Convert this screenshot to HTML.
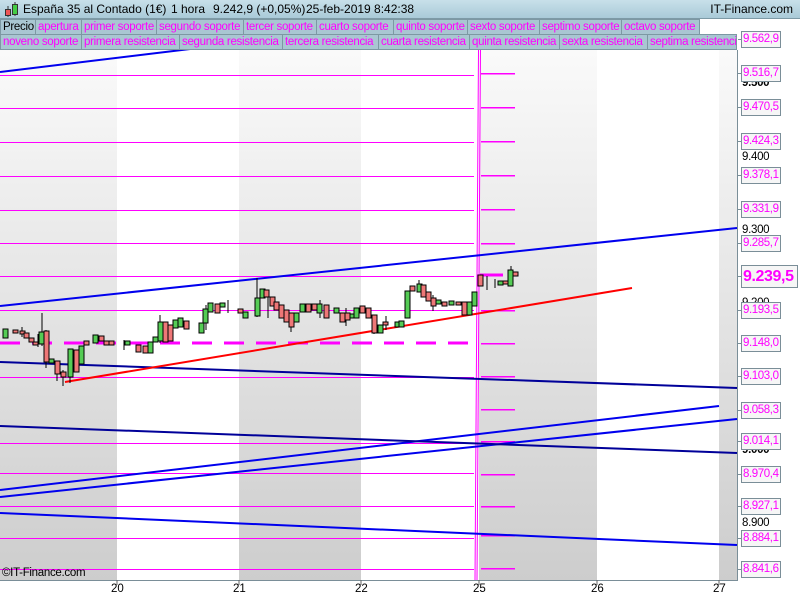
<!DOCTYPE html>
<html><head><meta charset="utf-8"><style>
*{margin:0;padding:0;box-sizing:border-box}
body{width:800px;height:600px;overflow:hidden;background:#fff;font-family:"Liberation Sans",sans-serif;position:relative}
.title{position:absolute;left:0;top:0;width:800px;height:19px;background:linear-gradient(#c8e0ea,#a9cad8);border-bottom:1px solid #7d9aa6;font-size:12px;line-height:19px;color:#000}
.title span{position:absolute}
.row{position:absolute;left:0;height:16px;font-size:11.5px;line-height:14px}
.tab{position:absolute;top:0;height:16px;background:#a9c6d2;border:1px solid #7d98a3;color:#ff00ff;padding-left:2px;white-space:nowrap;overflow:hidden;letter-spacing:-0.3px}
.lbl{position:absolute;left:741px;width:40px;height:17px;border:1px solid #7a8e98;background:#f6f6f6;color:#ff00ff;font-size:11.5px;line-height:15px;padding-left:1px;letter-spacing:-0.4px}
.ax{position:absolute;left:742px;font-size:11.5px;color:#000;letter-spacing:-0.3px}
.xl{position:absolute;top:583px;font-size:11.5px;color:#000}
</style></head><body>
<svg width="800" height="600" style="position:absolute;left:0;top:0">
<defs><linearGradient id="g" x1="0" y1="0" x2="0" y2="1"><stop offset="0" stop-color="#fafafa"/><stop offset="1" stop-color="#cdcdcd"/></linearGradient></defs>
<rect x="0" y="50" width="117" height="530" fill="url(#g)"/>
<rect x="239" y="50" width="122" height="530" fill="url(#g)"/>
<rect x="479" y="50" width="118" height="530" fill="url(#g)"/>
<rect x="719" y="50" width="18" height="530" fill="url(#g)"/>
<line x1="737.5" y1="50" x2="737.5" y2="580" stroke="#7a8e98"/>
<line x1="0" y1="580.5" x2="738" y2="580.5" stroke="#7a8e98"/>
<g stroke="#666"><line x1="117" y1="580" x2="117" y2="585"/><line x1="239" y1="580" x2="239" y2="585"/><line x1="361" y1="580" x2="361" y2="585"/><line x1="479" y1="580" x2="479" y2="585"/><line x1="597" y1="580" x2="597" y2="585"/><line x1="719" y1="580" x2="719" y2="585"/></g>
<path fill="none" stroke="#ff00ff" stroke-width="1" d="M0 75.5H474M0 108.5H474M0 142.5H474M0 176.5H474M0 210.5H474M0 243.5H474M0 276.5H474M0 310.5H474M0 377.5H474M0 443.5H474M0 473.5H474M0 506.5H474M0 538.5H474M0 569.5H474"/>
<g fill="#ff00ff">
<rect x="481" y="73" width="34" height="1.5"/><rect x="481" y="107" width="34" height="1.5"/><rect x="481" y="141" width="34" height="1.5"/><rect x="481" y="175" width="34" height="1.5"/><rect x="481" y="209" width="34" height="1.5"/><rect x="481" y="243" width="34" height="1.5"/><rect x="481" y="310" width="34" height="1.5"/><rect x="481" y="343" width="34" height="1.5"/><rect x="481" y="376" width="34" height="1.5"/><rect x="481" y="409" width="34" height="1.5"/><rect x="481" y="441" width="34" height="1.5"/><rect x="481" y="474" width="34" height="1.5"/><rect x="481" y="506" width="34" height="1.5"/><rect x="481" y="535" width="34" height="1.5"/><rect x="481" y="568" width="34" height="1.5"/>
</g>
<path fill="none" stroke="#ff00ff" stroke-width="1" d="M478.5 50L475 580M480.5 50L477 580"/>
<line x1="0" y1="343" x2="470" y2="343" stroke="#ff00ff" stroke-width="3" stroke-dasharray="20,12"/>
<line x1="480" y1="275" x2="503" y2="275" stroke="#ff00ff" stroke-width="3"/>
<g stroke-width="2" fill="none">
<line x1="0" y1="306" x2="737" y2="228" stroke="#0000ee"/>
<line x1="0" y1="72" x2="215" y2="46" stroke="#0000ee"/>
<line x1="0" y1="362" x2="737" y2="388" stroke="#000099"/>
<line x1="0" y1="490" x2="719" y2="406" stroke="#0000ee"/>
<line x1="0" y1="497" x2="737" y2="419" stroke="#0000ee"/>
<line x1="0" y1="426" x2="737" y2="453" stroke="#000099"/>
<line x1="0" y1="513" x2="737" y2="545" stroke="#0000ee"/>
<line x1="65" y1="382" x2="632" y2="288" stroke="#ff0000"/>
</g>
<g stroke="#000" stroke-width="1">
<path d="M42 313V346M46 330V368M57 361V381M63 370V386M70 349V383M160 315V343M257 278V317M291 313V332M374 315V334M419 280V292M511 266V286M22 327V337M38 334V347M124 340V350M206 305V330M228 300V313M268 292V318M320 300V318M346 308V326M386 316V330M433 295V311M487 276V290M495 279V288"/>
</g>
<g stroke="#000" stroke-width="1">
<rect x="3" y="329" width="5" height="9" fill="#5c5"/><rect x="13" y="330" width="5" height="3" fill="#e77"/><rect x="20" y="331" width="5" height="3" fill="#e77"/><rect x="24" y="333" width="5" height="5" fill="#e77"/><rect x="29" y="338" width="5" height="4" fill="#e77"/><rect x="33" y="342" width="5" height="3" fill="#e77"/><rect x="39" y="332" width="5" height="12" fill="#5c5"/><rect x="44" y="331" width="5" height="31" fill="#e77"/><rect x="49" y="359" width="5" height="4" fill="#5c5"/><rect x="55" y="361" width="5" height="13" fill="#e77"/><rect x="61" y="372" width="5" height="5" fill="#e77"/><rect x="68" y="349" width="5" height="28" fill="#5c5"/><rect x="74" y="350" width="5" height="22" fill="#e77"/><rect x="79" y="346" width="5" height="18" fill="#5c5"/><rect x="84" y="341" width="5" height="4" fill="#e77"/><rect x="93" y="335" width="5" height="8" fill="#5c5"/><rect x="99" y="336" width="5" height="5" fill="#e77"/><rect x="104" y="341" width="5" height="4" fill="#e77"/><rect x="109" y="341" width="5" height="4" fill="#e77"/><rect x="125" y="341" width="5" height="4" fill="#5c5"/><rect x="136" y="345" width="5" height="7" fill="#e77"/><rect x="143" y="346" width="5" height="7" fill="#e77"/><rect x="148" y="342" width="5" height="11" fill="#5c5"/><rect x="153" y="337" width="5" height="5" fill="#5c5"/><rect x="158" y="322" width="5" height="19" fill="#5c5"/><rect x="163" y="322" width="5" height="20" fill="#e77"/><rect x="168" y="325" width="5" height="16" fill="#e77"/><rect x="173" y="320" width="5" height="8" fill="#5c5"/><rect x="178" y="318" width="5" height="9" fill="#5c5"/><rect x="184" y="321" width="5" height="8" fill="#e77"/>
<rect x="199" y="323" width="5" height="10" fill="#5c5"/><rect x="203" y="309" width="5" height="14" fill="#5c5"/><rect x="208" y="303" width="5" height="9" fill="#5c5"/><rect x="215" y="304" width="5" height="9" fill="#e77"/><rect x="220" y="303" width="5" height="4" fill="#5c5"/><rect x="238" y="309" width="5" height="4" fill="#e77"/><rect x="243" y="312" width="5" height="6" fill="#5c5"/><rect x="255" y="298" width="5" height="18" fill="#5c5"/><rect x="260" y="289" width="5" height="9" fill="#5c5"/><rect x="264" y="290" width="5" height="7" fill="#e77"/><rect x="270" y="297" width="5" height="9" fill="#e77"/><rect x="274" y="302" width="5" height="8" fill="#e77"/><rect x="279" y="305" width="5" height="13" fill="#e77"/><rect x="284" y="310" width="5" height="12" fill="#e77"/><rect x="289" y="313" width="5" height="14" fill="#e77"/><rect x="294" y="313" width="5" height="9" fill="#5c5"/><rect x="300" y="304" width="5" height="8" fill="#5c5"/><rect x="306" y="304" width="5" height="8" fill="#e77"/><rect x="312" y="304" width="5" height="6" fill="#e77"/><rect x="317" y="304" width="5" height="9" fill="#5c5"/><rect x="324" y="305" width="5" height="13" fill="#e77"/><rect x="334" y="308" width="5" height="5" fill="#5c5"/><rect x="340" y="313" width="5" height="9" fill="#e77"/><rect x="345" y="313" width="5" height="7" fill="#e77"/><rect x="350" y="314" width="5" height="4" fill="#5c5"/><rect x="354" y="308" width="5" height="10" fill="#5c5"/><rect x="360" y="306" width="5" height="7" fill="#e77"/><rect x="366" y="308" width="5" height="10" fill="#e77"/><rect x="372" y="315" width="5" height="18" fill="#e77"/><rect x="378" y="325" width="5" height="8" fill="#5c5"/><rect x="383" y="322" width="5" height="3" fill="#e77"/><rect x="395" y="322" width="5" height="5" fill="#5c5"/><rect x="399" y="321" width="5" height="6" fill="#5c5"/><rect x="405" y="291" width="5" height="27" fill="#5c5"/><rect x="410" y="286" width="5" height="5" fill="#e77"/><rect x="417" y="284" width="5" height="8" fill="#5c5"/><rect x="421" y="285" width="5" height="12" fill="#e77"/><rect x="426" y="292" width="5" height="9" fill="#e77"/><rect x="431" y="298" width="5" height="8" fill="#e77"/><rect x="436" y="300" width="5" height="4" fill="#5c5"/><rect x="442" y="302" width="5" height="4" fill="#e77"/><rect x="449" y="301" width="5" height="4" fill="#5c5"/><rect x="456" y="302" width="5" height="3" fill="#e77"/><rect x="462" y="302" width="5" height="13" fill="#e77"/><rect x="467" y="302" width="5" height="13" fill="#5c5"/><rect x="472" y="292" width="5" height="14" fill="#5c5"/><rect x="478" y="275" width="5" height="11" fill="#e77"/><rect x="498" y="281" width="5" height="4" fill="#5c5"/><rect x="503" y="281" width="5" height="3" fill="#e77"/><rect x="508" y="270" width="5" height="16" fill="#5c5"/><rect x="513" y="272" width="5" height="4" fill="#e77"/>
</g>
<path stroke="#7a8e98" d="M738 39.5H741M738 73.5H741M738 107.5H741M738 141.5H741M738 175.5H741M738 209.5H741M738 243.5H741M738 276.5H741M738 310.5H741M738 343.5H741M738 376.5H741M738 410.5H741M738 441.5H741M738 474.5H741M738 506.5H741M738 538.5H741M738 569.5H741"/>
</svg>
<div class="title">
<svg width="22" height="19" style="position:absolute;left:2px;top:0"><line x1="6" y1="6" x2="6" y2="17" stroke="#333"/><rect x="3.5" y="9.5" width="5" height="6" fill="#e55" stroke="#333"/><line x1="13" y1="2" x2="13" y2="16" stroke="#333"/><rect x="10.5" y="4.5" width="5" height="10" fill="#4c4" stroke="#333"/></svg>
<span style="left:23px">España 35 al Contado (1€)</span>
<span style="left:171px">1 hora</span>
<span style="left:213px">9.242,9 (+0,05%)</span>
<span style="left:306px">25-feb-2019 8:42:38</span>
<span style="right:7px">IT-Finance.com</span></div>
<div class="row" style="top:19px;width:800px">
<div class="tab" style="left:0;width:36px;color:#000">Precio</div>
<div class="tab" style="left:35px;width:47px">apertura</div>
<div class="tab" style="left:81px;width:76px">primer soporte</div>
<div class="tab" style="left:156px;width:88px">segundo soporte</div>
<div class="tab" style="left:243px;width:74px">tercer soporte</div>
<div class="tab" style="left:316px;width:78px">cuarto soporte</div>
<div class="tab" style="left:393px;width:75px">quinto soporte</div>
<div class="tab" style="left:467px;width:73px">sexto soporte</div>
<div class="tab" style="left:539px;width:83px">septimo soporte</div>
<div class="tab" style="left:621px;width:79px">octavo soporte</div>
</div>
<div class="row" style="top:34px;width:800px">
<div class="tab" style="left:0;width:82px">noveno soporte</div>
<div class="tab" style="left:81px;width:99px">primera resistencia</div>
<div class="tab" style="left:179px;width:104px">segunda resistencia</div>
<div class="tab" style="left:282px;width:97px">tercera resistencia</div>
<div class="tab" style="left:378px;width:92px">cuarta resistencia</div>
<div class="tab" style="left:469px;width:91px">quinta resistencia</div>
<div class="tab" style="left:559px;width:89px">sexta resistencia</div>
<div class="tab" style="left:647px;width:90px">septima resistenci</div>
</div>
<div class="ax" style="top:77px;font-weight:bold">9.500</div>
<div class="ax" style="top:151px">9.400</div>
<div class="ax" style="top:224px">9.300</div>
<div class="ax" style="top:297px">9.200</div>
<div class="ax" style="top:444px;font-weight:bold">9.000</div>
<div class="ax" style="top:517px">8.900</div>
<div class="lbl" style="top:31px">9.562,9</div>
<div class="lbl" style="top:65px">9.516,7</div>
<div class="lbl" style="top:99px">9.470,5</div>
<div class="lbl" style="top:133px">9.424,3</div>
<div class="lbl" style="top:167px">9.378,1</div>
<div class="lbl" style="top:201px">9.331,9</div>
<div class="lbl" style="top:235px">9.285,7</div>
<div class="lbl" style="top:265px;width:57px;height:23px;font-size:16px;font-weight:bold;line-height:21px">9.239,5</div>
<div class="lbl" style="top:302px">9.193,5</div>
<div class="lbl" style="top:335px">9.148,0</div>
<div class="lbl" style="top:368px">9.103,0</div>
<div class="lbl" style="top:402px">9.058,3</div>
<div class="lbl" style="top:433px">9.014,1</div>
<div class="lbl" style="top:466px">8.970,4</div>
<div class="lbl" style="top:498px">8.927,1</div>
<div class="lbl" style="top:530px">8.884,1</div>
<div class="lbl" style="top:561px">8.841,6</div>
<div style="position:absolute;left:2px;top:567px;font-size:11.5px;letter-spacing:-0.3px">©IT-Finance.com</div>
<div class="xl" style="left:111px">20</div>
<div class="xl" style="left:233px">21</div>
<div class="xl" style="left:355px">22</div>
<div class="xl" style="left:473px">25</div>
<div class="xl" style="left:591px">26</div>
<div class="xl" style="left:713px">27</div>
</body></html>
